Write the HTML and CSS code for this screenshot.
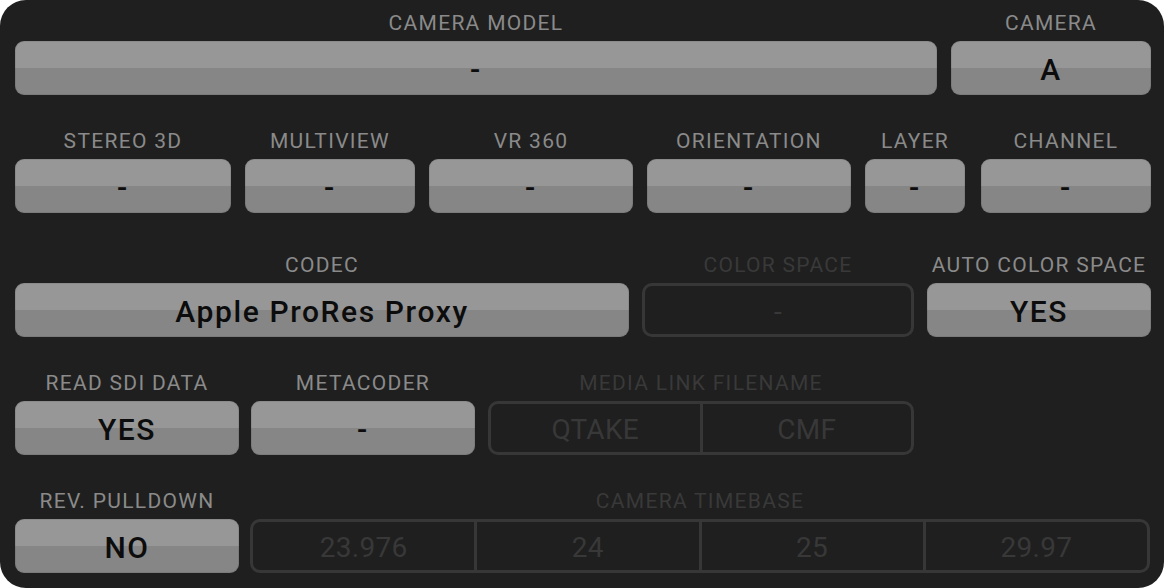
FILE: index.html
```html
<!DOCTYPE html>
<html>
<head>
<meta charset="utf-8">
<link rel="stylesheet" href="styles.css">
</head>
<body>
<div class="panel">
  <div class="row r1">
    <div class="field"><div class="label">CAMERA MODEL</div><div class="btn">-</div></div>
    <div class="field"><div class="label">CAMERA</div><div class="btn">A</div></div>
  </div>
  <div class="row r2">
    <div class="field"><div class="label">STEREO 3D</div><div class="btn">-</div></div>
    <div class="field"><div class="label">MULTIVIEW</div><div class="btn">-</div></div>
    <div class="field"><div class="label">VR 360</div><div class="btn">-</div></div>
    <div class="field"><div class="label">ORIENTATION</div><div class="btn">-</div></div>
    <div class="field"><div class="label">LAYER</div><div class="btn">-</div></div>
    <div class="field"><div class="label">CHANNEL</div><div class="btn">-</div></div>
  </div>
  <div class="row r3">
    <div class="field"><div class="label">CODEC</div><div class="btn">Apple ProRes Proxy</div></div>
    <div class="field"><div class="label off">COLOR SPACE</div><div class="seg"><div class="cell">-</div></div></div>
    <div class="field"><div class="label">AUTO COLOR SPACE</div><div class="btn">YES</div></div>
  </div>
  <div class="row r4">
    <div class="field"><div class="label">READ SDI DATA</div><div class="btn">YES</div></div>
    <div class="field"><div class="label">METACODER</div><div class="btn">-</div></div>
    <div class="field"><div class="label off">MEDIA LINK FILENAME</div><div class="seg"><div class="cell">QTAKE</div><div class="cell">CMF</div></div></div>
  </div>
  <div class="row r5">
    <div class="field"><div class="label">REV. PULLDOWN</div><div class="btn">NO</div></div>
    <div class="field"><div class="label off">CAMERA TIMEBASE</div><div class="seg"><div class="cell">23.976</div><div class="cell">24</div><div class="cell">25</div><div class="cell">29.97</div></div></div>
  </div>
</div>
</body>
</html>
```

FILE: styles.css
```css
html, body {
  margin: 0;
  padding: 0;
  background: #ffffff;
}
.panel {
  width: 1164px;
  height: 588px;
  box-sizing: border-box;
  background: #1f1f1f;
  border-radius: 26px;
  padding: 8px 13px 0 15px;
  font-family: Roboto, "Liberation Sans", sans-serif;
}
.row {
  display: grid;
}
.r1 { grid-template-columns: 922px 200px; column-gap: 14px; }
.r2 { grid-template-columns: 216px 170px 204px 204px 100px 172px; column-gap: 14px; margin-top: 31px; }
.r2 .field:last-child { margin-left: 2px; }
.r3 { grid-template-columns: 614px 272px 224px; column-gap: 13px; margin-top: 37px; }
.r4 { grid-template-columns: 224px 224px 427px; column-gap: 12px; margin-top: 31px; }
.r4 .field:last-child { margin-left: 1px; }
.r5 { grid-template-columns: 224px 900px; column-gap: 11px; margin-top: 31px; }
.field {
  display: flex;
  flex-direction: column;
  gap: 5px;
}
.label {
  height: 28px;
  line-height: 30px;
  text-align: center;
  font-size: 21px;
  letter-spacing: 1.3px;
  color: #8a8a8a;
  white-space: nowrap;
}
.label.off {
  color: #393939;
}
.btn {
  height: 54px;
  line-height: 57px;
  box-sizing: border-box;
  border-radius: 9px;
  background: linear-gradient(#979797 0, #979797 50%, #868686 50%, #868686 100%);
  box-shadow: inset 0 0 0 1px rgba(0,0,0,0.08);
  text-align: center;
  font-size: 30px;
  font-weight: 500;
  letter-spacing: 1.6px;
  color: #0c0c0c;
  white-space: nowrap;
}
.seg {
  height: 54px;
  box-sizing: border-box;
  border: 3px solid #373737;
  border-radius: 10px;
  display: flex;
}
.cell {
  flex: 1;
  text-align: center;
  line-height: 51px;
  font-size: 28px;
  letter-spacing: 0.3px;
  color: #383838;
}
.cell + .cell {
  border-left: 3px solid #373737;
}
```
